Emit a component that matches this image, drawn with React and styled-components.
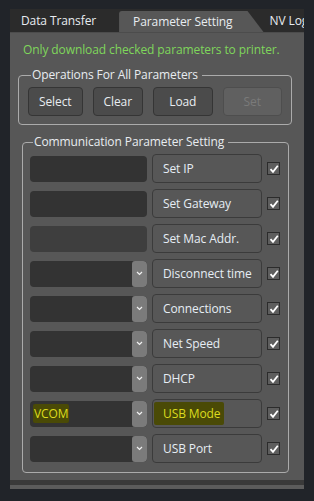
import React from "react";
import styled, { createGlobalStyle } from "styled-components";

const GlobalStyle = createGlobalStyle`
  html, body {
    margin: 0;
    padding: 0;
    background: #212429;
  }
  body {
    font-family: "Open Sans", "Noto Sans", sans-serif;
    font-size: 12px;
    letter-spacing: -0.1px;
  }
`;

const Window = styled.div`
  width: 294px;
  margin: 9px 0 0 10px;
`;

const TabBar = styled.div`
  display: flex;
  align-items: flex-end;
  height: 23px;
  background: #2b2b2b;
  overflow: hidden;
`;

const Tab = styled.div`
  flex: none;
  height: 23px;
  display: flex;
  align-items: center;
  padding: ${p => p.$pad};
  color: #e8ecf0;
  white-space: nowrap;
`;

const ActiveTab = styled(Tab)`
  height: 21px;
  background: #575757;
  border-radius: 3px 0 0 0;
  clip-path: polygon(0 0, calc(100% - 16px) 0, 100% 100%, 0 100%);
`;

const Body = styled.div`
  background: #575757;
  height: 448px;
  padding: 8px 12px 0 8px;
  box-sizing: border-box;
  border-top: 1px solid #4c4c4c;
`;

const BottomEdge = styled.div`
  height: 5px;
  background: #3a3a3a;
  border-bottom: 4px solid #5c5c5c;
`;

const Note = styled.div`
  color: #7fd65b;
  margin: 0 0 8px 5px;
  line-height: 18px;
  white-space: nowrap;
`;

const Group = styled.fieldset`
  margin: ${p => p.$margin || "0"};
  padding: ${p => p.$padding || "0"};
  border: 1px solid #ababab;
  border-radius: 4px;
  min-width: 0;
`;

const Legend = styled.legend`
  color: #e8ecf0;
  padding: 0 4px 0 1px;
  margin-left: 3px;
  line-height: 16px;
`;

const ButtonRow = styled.div`
  display: flex;
  gap: 10px;
`;

const Button = styled.button`
  width: ${p => p.$w}px;
  height: 29px;
  padding: 0;
  font: inherit;
  letter-spacing: inherit;
  color: ${p => (p.disabled ? "#7a7a7a" : "#e8ecf0")};
  background: ${p => (p.disabled ? "#606060" : "#4b4b4b")};
  border: 1px solid ${p => (p.disabled ? "#4e4e4e" : "#353535")};
  border-radius: 4px;
`;

const ParamGrid = styled.div`
  display: grid;
  grid-template-columns: 117px 110px 13px;
  grid-auto-rows: 29px;
  column-gap: 5px;
  row-gap: 6px;
  align-items: center;
`;

const Field = styled.div`
  height: 26px;
  display: flex;
  align-items: center;
  background: ${p => (p.$disabled ? "#3e3e3e" : "#333333")};
  border-radius: 4px;
  overflow: hidden;
`;

const FieldText = styled.span`
  flex: 1;
  padding-left: 3px;
  display: flex;
`;

const Mark = styled.span`
  display: inline-block;
  background: #4a4a06;
  color: #dcdc1e;
  line-height: 19px;
  padding: ${p => p.$pad || "0 1px"};
  margin-left: ${p => p.$shift || "0"};
  border-radius: 2px;
`;

const DropButton = styled.div`
  width: 15px;
  height: 100%;
  flex: none;
  display: flex;
  align-items: center;
  justify-content: center;
  background: #7b7b7b;
  border-radius: 3px;
`;

const LabelBox = styled.div`
  height: 27px;
  display: flex;
  align-items: center;
  padding-left: 10px;
  color: #e6edf4;
  border: 1px solid #3b3b3b;
  border-radius: 4px;
  white-space: nowrap;
`;

const Check = styled.div`
  width: 11px;
  height: 11px;
  border: 1px solid #2c2c2c;
  background: #5e5e5e;
  display: flex;
  align-items: center;
  justify-content: center;
`;

const Chevron = () => (
  <svg width="7" height="5" viewBox="0 0 7 5">
    <path d="M1 1 L3.5 3.5 L6 1" fill="none" stroke="#f2f2f2" strokeWidth="1.2" />
  </svg>
);

const Tick = () => (
  <svg width="10" height="10" viewBox="0 0 10 10">
    <path d="M1.5 5.2 L4 7.8 L8.8 1.8" fill="none" stroke="#ffffff" strokeWidth="1.8" />
  </svg>
);

const params = [
  { label: "Set IP" },
  { label: "Set Gateway" },
  { label: "Set Mac Addr.", disabled: true },
  { label: "Disconnect time", drop: true },
  { label: "Connections", drop: true },
  { label: "Net Speed", drop: true },
  { label: "DHCP", drop: true },
  { label: "USB Mode", drop: true, value: "VCOM", marked: true },
  { label: "USB Port", drop: true },
];

export default function App() {
  return (
    <>
      <GlobalStyle />
      <Window>
        <TabBar>
          <Tab $pad="0 23px 0 11px">Data Transfer</Tab>
          <ActiveTab $pad="0 31px 0 14px">Parameter Setting</ActiveTab>
          <Tab $pad="0 0 0 6px">NV Log</Tab>
        </TabBar>
        <Body>
          <Note>Only download checked parameters to printer.</Note>
          <Group $padding="4px 9px 8px 9px">
            <Legend>Operations For All Parameters</Legend>
            <ButtonRow>
              <Button $w={55}>Select</Button>
              <Button $w={51}>Clear</Button>
              <Button $w={60}>Load</Button>
              <Button $w={60} disabled>Set</Button>
            </ButtonRow>
          </Group>
          <Group $margin="9px 3px 0 4px" $padding="4px 9px 9px 7px">
            <Legend>Communication Parameter Setting</Legend>
            <ParamGrid>
              {params.map(p => (
                <React.Fragment key={p.label}>
                  <Field $disabled={p.disabled}>
                    <FieldText>{p.value && <Mark>{p.value}</Mark>}</FieldText>
                    {p.drop && (
                      <DropButton>
                        <Chevron />
                      </DropButton>
                    )}
                  </Field>
                  <LabelBox>
                    {p.marked ? (
                      <Mark $pad="2px 3px 2px 9px" $shift="-9px">{p.label}</Mark>
                    ) : (
                      p.label
                    )}
                  </LabelBox>
                  <Check>
                    <Tick />
                  </Check>
                </React.Fragment>
              ))}
            </ParamGrid>
          </Group>
        </Body>
        <BottomEdge />
      </Window>
    </>
  );
}
